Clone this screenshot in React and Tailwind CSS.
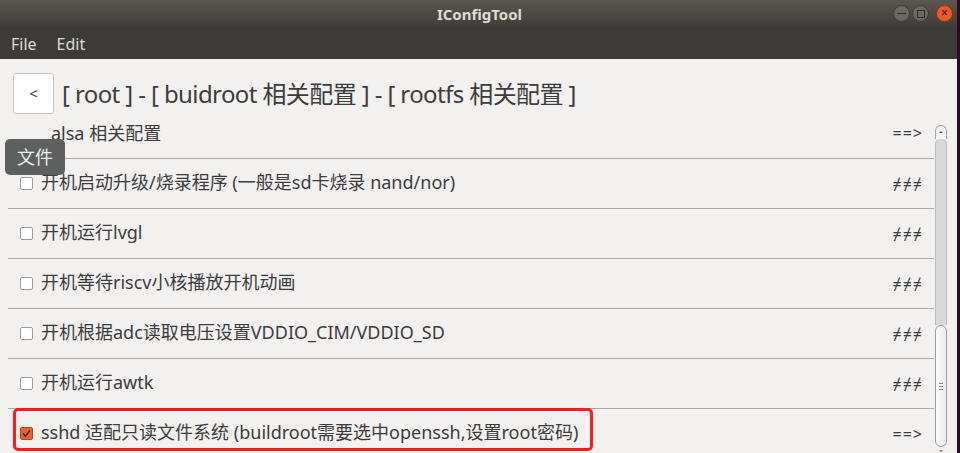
import React from 'react'

const FONT = { fontFamily: "'Noto Sans', 'Noto Sans CJK SC', sans-serif" }

const rows = [
  { label: '开机启动升级/烧录程序 (一般是sd卡烧录 nand/nor)', mark: '≠≠≠' },
  { label: '开机运行lvgl', mark: '≠≠≠' },
  { label: '开机等待riscv小核播放开机动画', mark: '≠≠≠' },
  { label: '开机根据adc读取电压设置VDDIO_CIM/VDDIO_SD', mark: '≠≠≠' },
  { label: '开机运行awtk', mark: '≠≠≠' },
  { label: 'sshd 适配只读文件系统 (buildroot需要选中openssh,设置root密码)', mark: '==>', checked: true },
]

function Checkbox({ checked }) {
  if (checked) {
    return (
      <div className="w-[13px] h-[13px] rounded-[2px] bg-[#e5632e] border border-[#b8471c] flex items-center justify-center">
        <svg width="9" height="9" viewBox="0 0 9 9">
          <path d="M1 4.5 L3.5 7 L8 1.5" fill="none" stroke="#4a2214" strokeWidth="1.6" />
        </svg>
      </div>
    )
  }
  return <div className="w-[13px] h-[13px] rounded-[2px] bg-white border border-[#9c9c9c]" />
}

function WinButton({ close, children }) {
  return (
    <div
      className={`w-[17px] h-[17px] rounded-full flex items-center justify-center border ${
        close ? 'bg-[#e95b2b] border-[#8c3214]' : 'bg-[#6a6863] border-[#3a3935]'
      }`}
    >
      {children}
    </div>
  )
}

export default function App() {
  return (
    <div className="w-[960px] h-[453px] flex bg-[#2c0a1f] overflow-hidden" style={FONT}>
      <div className="w-[957px] h-full flex flex-col bg-[#f2f1f0] relative">
        {/* Title bar */}
        <div className="h-[28px] bg-gradient-to-b from-[#5b5750] to-[#3e3c38] flex items-center relative">
          <div className="flex-1 text-center text-[15px] font-bold text-[#dfdbd2] pl-[2px]">IConfigTool</div>
          <div className="absolute right-[4px] top-[5px] flex items-center gap-[2px]">
            <WinButton>
              <div className="w-[9px] h-[1.5px] bg-[#2f2e2b]" />
            </WinButton>
            <WinButton>
              <div className="w-[8px] h-[8px] border-[1.5px] border-[#2f2e2b]" />
            </WinButton>
            <div className="w-[3px]" />
            <WinButton close>
              <span className="text-[12px] leading-none text-[#3a1508] -mt-[1px]">×</span>
            </WinButton>
          </div>
        </div>

        {/* Menu bar */}
        <div className="h-[31px] bg-[#3c3b37] flex items-center gap-[20px] pl-[11px] text-[16px] text-[#dfdbd2]">
          <span>File</span>
          <span>Edit</span>
        </div>

        {/* Breadcrumb */}
        <div className="flex items-center gap-[8px] pl-[13px] mt-[14px] h-[41px]">
          <button className="w-[41px] h-[41px] bg-white border border-[#c4c4c4] rounded-[3px] text-[15px] text-[#333]">
            &lt;
          </button>
          <div className="text-[24px] tracking-[-0.6px] text-[#3c3c3c] whitespace-nowrap">
            [ root ] - [ buidroot 相关配置 ] - [ rootfs 相关配置 ]
          </div>
        </div>

        {/* List */}
        <div className="flex-1 mt-[8px] flex pl-[8px] pr-[10px] overflow-hidden">
          <div className="flex-1 overflow-hidden">
            {/* partially scrolled-off first entry */}
            <div className="h-[37px] pb-[15px] border-b border-[#a8a8a8] flex items-center pl-[43px] pr-[11px] text-[18px] leading-[22px] text-[#3c3c3c]">
              <span className="flex-1">alsa 相关配置</span>
              <span className="text-[16px] tracking-[1px]">==&gt;</span>
            </div>
            {rows.map((r) => (
              <div
                key={r.label}
                className="h-[50px] border-b border-[#a8a8a8] flex items-center pl-[12px] pr-[11px] text-[18px] text-[#3c3c3c]"
              >
                <Checkbox checked={r.checked} />
                <span className="flex-1 ml-[8px] -mt-[2px] whitespace-nowrap">{r.label}</span>
                <span className="text-[16px] tracking-[1px]">{r.mark}</span>
              </div>
            ))}
          </div>

          {/* Scrollbar */}
          <div className="w-[12px] ml-[1px] mt-[3px] flex flex-col">
            <div className="h-[14px] bg-[#f7f7f7] border border-b-0 border-[#a5a5a5] rounded-t-[6px] flex justify-center pt-[5px]">
              <div className="w-0 h-0 border-l-[2px] border-r-[2px] border-b-[2px] border-l-transparent border-r-transparent border-b-[#555]" />
            </div>
            <div className="h-[186px] bg-[#d9d9d9] border-x border-[#bcbcbc] rounded-t-[5px]" />
            <div className="h-[122px] bg-gradient-to-r from-[#fbfbfb] to-[#ececec] border border-[#9d9d9d] rounded-[6px] flex flex-col items-center justify-center gap-[2px]">
              <div className="w-[4px] h-[1px] bg-[#888]" />
              <div className="w-[4px] h-[1px] bg-[#888]" />
              <div className="w-[4px] h-[1px] bg-[#888]" />
            </div>
            <div className="flex justify-center pt-[3px]">
              <div className="w-0 h-0 border-l-[2px] border-r-[2px] border-t-[2px] border-l-transparent border-r-transparent border-t-[#777]" />
            </div>
          </div>
        </div>

        {/* Tooltip */}
        <div className="absolute left-[5px] top-[139px] w-[60px] h-[36px] rounded-[5px] bg-[#5e6060] flex items-center justify-center text-[18px] text-[#ececec]">
          文件
        </div>

        {/* Highlight box */}
        <div className="absolute left-[13px] top-[408px] w-[580px] h-[43px] border-[3px] border-[#ff1b1b] rounded-[5px]" />
      </div>
    </div>
  )
}
